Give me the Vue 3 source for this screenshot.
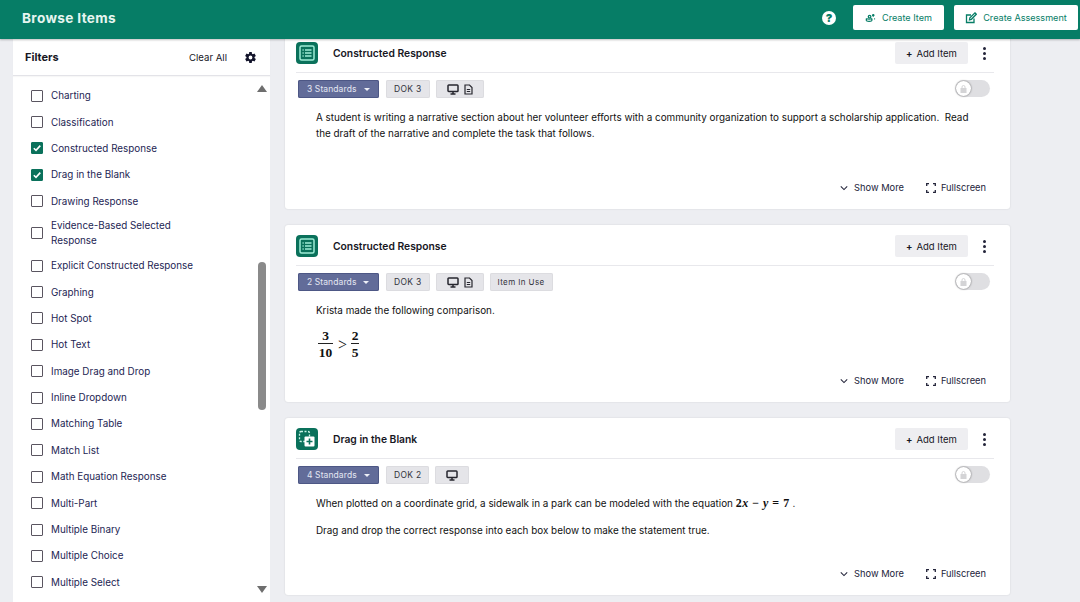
<script setup>
const filters = [
  { label: 'Charting' },
  { label: 'Classification' },
  { label: 'Constructed Response', checked: true },
  { label: 'Drag in the Blank', checked: true },
  { label: 'Drawing Response' },
  { label: 'Evidence-Based Selected Response', tall: true },
  { label: 'Explicit Constructed Response' },
  { label: 'Graphing' },
  { label: 'Hot Spot' },
  { label: 'Hot Text' },
  { label: 'Image Drag and Drop' },
  { label: 'Inline Dropdown' },
  { label: 'Matching Table' },
  { label: 'Match List' },
  { label: 'Math Equation Response' },
  { label: 'Multi-Part' },
  { label: 'Multiple Binary' },
  { label: 'Multiple Choice' },
  { label: 'Multiple Select' }
]

const items = [
  { id: 1, type: 'list', title: 'Constructed Response', standards: '3 Standards', dok: 'DOK 3', doc: true },
  { id: 2, type: 'list', title: 'Constructed Response', standards: '2 Standards', dok: 'DOK 3', doc: true, inUse: true },
  { id: 3, type: 'drag', title: 'Drag in the Blank', standards: '4 Standards', dok: 'DOK 2', doc: false }
]
</script>

<template>
  <div class="page">
    <header class="topbar">
      <h1 class="page-title">Browse Items</h1>
      <div class="top-actions">
        <span class="help">?</span>
        <button class="top-btn item-btn">
          <svg width="11" height="12" viewBox="0 0 12 12" fill="none" stroke="#067d66" stroke-width="1.4">
            <path d="M1.500 6.500c2 1 4 1 6 0M1.500 9c2 1 4 1 6 0M1.500 6.500V9M7.500 6.500V9" />
            <circle cx="5" cy="4.500" r="1.400" />
            <path d="M9 1.500v3M7.700 3h2.600M10 7h1" />
          </svg>
          Create Item
        </button>
        <button class="top-btn assess-btn">
          <svg width="12" height="12" viewBox="0 0 12 12" fill="none" stroke="#067d66" stroke-width="1.3">
            <path d="M9 6.500V10.500H1.500V3H6" />
            <path d="M4.500 7.800l.4-2L10 .9l1.300 1.400L6.400 7.300z" />
          </svg>
          Create Assessment
        </button>
      </div>
    </header>

    <div class="body">
      <aside class="sidebar">
        <div class="filter-head">
          <span class="filter-title">Filters</span>
          <span class="clear">Clear All</span>
          <svg class="gear" width="13" height="13" viewBox="0 0 24 24" fill="#12132a">
            <path d="M19.400 13c.1-.3.1-.7.1-1s0-.7-.1-1l2.500-1.900-2.500-4.300-3 1.200c-.5-.4-1.100-.7-1.700-1L14.300 1.800H9.700L9.300 5c-.6.3-1.200.6-1.700 1l-3-1.200L2.100 9.100 4.600 11c-.1.300-.1.700-.1 1s0 .7.1 1l-2.500 1.900 2.500 4.300 3-1.200c.5.400 1.100.7 1.700 1l.4 3.200h4.600l.4-3.200c.6-.3 1.200-.6 1.700-1l3 1.200 2.500-4.300zM12 15.500a3.500 3.500 0 1 1 0-7 3.500 3.500 0 0 1 0 7z" />
          </svg>
        </div>
        <ul class="filter-list">
          <li v-for="f in filters" :key="f.label" class="filter" :class="{ tall: f.tall }">
            <span class="check" :class="{ on: f.checked }">
              <svg v-if="f.checked" width="10" height="10" viewBox="0 0 10 10" fill="none" stroke="#fff" stroke-width="1.600">
                <path d="M1.800 5.200 4 7.400 8.300 2.600" />
              </svg>
            </span>
            <span class="filter-label">{{ f.label }}</span>
          </li>
        </ul>
        <div class="scroll-thumb"></div>
        <span class="arrow up"></span>
        <span class="arrow down"></span>
      </aside>

      <main class="results">
        <section v-for="item in items" :key="item.id" class="card">
          <div class="card-head">
            <span class="type-icon">
              <svg v-if="item.type === 'list'" width="22" height="22" viewBox="0 0 22 22" fill="none" stroke="#9eecd6" stroke-width="1.500">
                <rect x="4" y="4" width="14" height="14" rx="1.500" />
                <path d="M6.500 8h1.200M9 8h6.500M6.500 11h1.200M9 11h6.500M6.500 14h1.200M9 14h6.500" />
              </svg>
              <svg v-else width="22" height="22" viewBox="0 0 22 22" fill="none">
                <rect x="3.500" y="3.500" width="10" height="10" rx="1.500" stroke="#c8f3e6" stroke-width="1.300" stroke-dasharray="2 1.500" />
                <rect x="8.500" y="8.500" width="10" height="10" rx="1" fill="#fff" />
                <path d="M13.500 10.500v6M10.500 13.500h6" stroke="#0a715b" stroke-width="1.600" />
              </svg>
            </span>
            <h2 class="card-title">{{ item.title }}</h2>
            <button class="add-btn"><span class="plus">+</span>Add Item</button>
            <span class="kebab"><i></i><i></i><i></i></span>
          </div>

          <div class="meta">
            <span class="pill standards">{{ item.standards }}<span class="caret"></span></span>
            <span class="pill">{{ item.dok }}</span>
            <span class="pill devices">
              <svg width="12" height="11" viewBox="0 0 12 11" fill="none" stroke="#26262e" stroke-width="1.500">
                <rect x="1" y="1" width="10" height="6.500" rx=".8" />
                <path d="M6 7.500v2M3.500 10h5" />
              </svg>
              <svg v-if="item.doc" width="9" height="11" viewBox="0 0 9 11" fill="none" stroke="#26262e" stroke-width="1.200">
                <path d="M1 1h4.500L8 3.500V10H1z" />
                <path d="M2.800 5.500h3.400M2.800 7.500h3.400" />
              </svg>
            </span>
            <span v-if="item.inUse" class="pill in-use">Item In Use</span>
            <span class="toggle"><span class="knob">
              <svg width="7" height="8" viewBox="0 0 7 8" fill="none" stroke="#d4d4d6" stroke-width="1">
                <rect x="1" y="3.500" width="5" height="4" fill="#d4d4d6" />
                <path d="M2 3.500V2a1.500 1.500 0 0 1 3 0v1.500" />
              </svg>
            </span></span>
          </div>

          <div class="content">
            <template v-if="item.id === 1">
              <p>A student is writing a narrative section about her volunteer efforts with a community organization to support a scholarship application.&nbsp; Read the draft of the narrative and complete the task that follows.</p>
            </template>
            <template v-else-if="item.id === 2">
              <p>Krista made the following comparison.</p>
              <div class="math-line">
                <span class="frac"><span>3</span><span class="den">10</span></span>
                <span class="gt">&gt;</span>
                <span class="frac"><span>2</span><span class="den">5</span></span>
              </div>
            </template>
            <template v-else>
              <p>When plotted on a coordinate grid, a sidewalk in a park can be modeled with the equation <span class="eq">2<em>x</em> − <em>y</em> = 7</span> .</p>
              <p class="second">Drag and drop the correct response into each box below to make the statement true.</p>
            </template>
          </div>

          <div class="card-foot">
            <span class="foot-link">
              <svg width="8" height="6" viewBox="0 0 10 6" fill="none" stroke="#23243a" stroke-width="1.300"><path d="M1 1l4 4 4-4" /></svg>
              Show More
            </span>
            <span class="foot-link full">
              <svg width="10" height="10" viewBox="0 0 10 10" fill="none" stroke="#23243a" stroke-width="1.300"><path d="M.7 3V.7H3M7 .7h2.300V3M9.300 7v2.300H7M3 9.300H.7V7" /></svg>
              Fullscreen
            </span>
          </div>
        </section>
      </main>
    </div>
  </div>
</template>

<style>
html, body {
  margin: 0;
  background: #edeef2;
}
</style>

<style scoped>
.page {
  width: 1080px;
  height: 602px;
  overflow: hidden;
  background: #edeef2;
  font-family: Inter, Lato, sans-serif;
  color: #17171f;
  position: relative;
}

.topbar {
  height: 39px;
  box-sizing: border-box;
  background: #067d66;
  box-shadow: 0 1px 2px rgba(0, 0, 0, 0.25);
  display: flex;
  align-items: center;
  justify-content: space-between;
  padding: 0 2px 4px 22px;
  position: relative;
  z-index: 2;
}

.page-title {
  margin: 0;
  font-size: 13.600px;
  font-weight: 700;
  color: #e6f5f0;
  letter-spacing: 0.35px;
}

.top-actions {
  display: flex;
  align-items: center;
}

.help {
  width: 14px;
  height: 14px;
  border-radius: 50%;
  background: #fff;
  color: #067d66;
  font-size: 11px;
  font-weight: 900;
  line-height: 14px;
  text-align: center;
  margin-right: 17px;
}

.top-btn {
  height: 25px;
  padding: 0;
  border: none;
  border-radius: 2px;
  background: #fff;
  color: #067d66;
  font-family: inherit;
  font-size: 9.100px;
  display: flex;
  align-items: center;
  justify-content: center;
  gap: 6px;
}

.item-btn {
  width: 91px;
  margin-right: 10px;
}

.assess-btn {
  width: 124px;
}

.body {
  display: flex;
  align-items: flex-start;
  padding-left: 13px;
}

.sidebar {
  width: 257px;
  height: 563px;
  background: #fff;
  position: relative;
  flex-shrink: 0;
}

.filter-head {
  height: 37px;
  box-sizing: border-box;
  display: flex;
  align-items: center;
  padding: 0 13px 0 12px;
  border-bottom: 1px solid #e3e3e8;
  box-shadow: 0 1px 1px rgba(0, 0, 0, 0.03);
}

.filter-title {
  font-size: 11px;
  font-weight: 700;
  flex: 1;
}

.clear {
  font-size: 9.600px;
  margin-right: 17px;
}

.filter-list {
  list-style: none;
  margin: 0;
  padding: 6.500px 0 0 18px;
}

.filter {
  height: 26.400px;
  display: flex;
  align-items: center;
  gap: 8px;
}

.filter.tall {
  height: 38px;
}

.check {
  width: 12px;
  height: 12px;
  box-sizing: border-box;
  border: 1.500px solid #5a5560;
  border-radius: 1px;
  flex-shrink: 0;
  display: flex;
  align-items: center;
  justify-content: center;
}

.check.on {
  background: #0a715b;
  border-color: #0a715b;
}

.filter-label {
  font-size: 9.850px;
  line-height: 15px;
  color: #1d2553;
  max-width: 150px;
}

.scroll-thumb {
  position: absolute;
  left: 245px;
  top: 223px;
  width: 8px;
  height: 148px;
  border-radius: 4px;
  background: #8a8a8a;
}

.arrow {
  position: absolute;
  left: 244px;
  width: 0;
  height: 0;
  border-left: 5px solid transparent;
  border-right: 5px solid transparent;
}

.arrow.up {
  top: 46px;
  border-bottom: 7px solid #6e6e6e;
}

.arrow.down {
  top: 547px;
  border-top: 7px solid #6e6e6e;
}

.results {
  margin-top: -7px;
  margin-left: 15px;
  width: 725px;
  display: flex;
  flex-direction: column;
  gap: 16px;
}

.card {
  height: 177px;
  box-sizing: border-box;
  background: #fff;
  border-radius: 3px;
  box-shadow: 0 0 2px rgba(0, 0, 0, 0.12);
  padding: 10px 16px 0 11px;
  display: flex;
  flex-direction: column;
}

.card-head {
  height: 30px;
  box-sizing: border-box;
  display: flex;
  align-items: flex-start;
}

.type-icon {
  width: 22px;
  height: 22px;
  border-radius: 4px;
  background: #0a715b;
  flex-shrink: 0;
}

.card-title {
  margin: 0 0 0 15px;
  font-size: 10.300px;
  font-weight: 600;
  line-height: 22px;
  flex: 1;
}

.add-btn {
  width: 73px;
  height: 22px;
  padding: 0;
  border: none;
  border-radius: 2px;
  background: #eeeef1;
  font-family: inherit;
  font-size: 9.500px;
  color: #17171f;
}

.plus {
  font-weight: 700;
  margin-right: 4px;
}

.kebab {
  width: 3px;
  height: 22px;
  margin: 0 8px 0 15px;
  display: flex;
  flex-direction: column;
  justify-content: center;
  gap: 2px;
}

.kebab i {
  width: 3px;
  height: 3px;
  border-radius: 50%;
  background: #23243a;
}

.meta {
  border-top: 1px solid #e8e8ec;
  padding: 7px 4px 0 2px;
  display: flex;
  align-items: flex-start;
  gap: 6px;
}

.pill {
  height: 18px;
  box-sizing: border-box;
  padding: 0 8px;
  border-radius: 2px;
  background: #e5e5e9;
  box-shadow: inset 0 0 0 1px #dcdce0;
  font-size: 8.500px;
  letter-spacing: 0.3px;
  color: #33333c;
  display: flex;
  align-items: center;
  white-space: nowrap;
}

.standards {
  width: 81px;
  background: #626c99;
  box-shadow: inset 0 0 0 1px #4d5785;
  color: #e4e7f2;
  padding-left: 9px;
  margin-right: 1px;
  letter-spacing: 0.1px;
}

.caret {
  margin-left: 7px;
  border-left: 3.500px solid transparent;
  border-right: 3.500px solid transparent;
  border-top: 3.500px solid #eef0f7;
}

.devices {
  gap: 5px;
  padding: 0 11px;
}

.in-use {
  font-size: 8px;
  letter-spacing: 0.4px;
}

.toggle {
  margin-left: auto;
  width: 35px;
  height: 17px;
  border-radius: 9px;
  background: #dfdfe2;
  position: relative;
}

.knob {
  position: absolute;
  left: 1px;
  top: 1px;
  width: 15px;
  height: 15px;
  border-radius: 50%;
  background: #fff;
  box-shadow: 0 0 2px rgba(0, 0, 0, 0.6);
  display: flex;
  align-items: center;
  justify-content: center;
}

.content {
  flex: 1;
  padding: 11px 18px 0 20px;
  font-size: 9.870px;
  line-height: 16px;
  color: #111;
}

.content p {
  margin: 0;
}

.content .second {
  margin-top: 11px;
}

.eq {
  font-family: "Liberation Serif", serif;
  font-weight: 700;
  font-size: 12px;
  letter-spacing: 0.5px;
}

.math-line {
  margin-top: 10px;
  margin-left: 2px;
  display: flex;
  align-items: center;
  font-family: "Liberation Serif", serif;
  font-weight: 700;
  font-size: 13.500px;
  line-height: 15px;
}

.frac {
  display: flex;
  flex-direction: column;
  align-items: center;
  min-width: 15px;
}

.frac + .gt + .frac {
  min-width: 8px;
}

.den {
  border-top: 1px solid #222;
  align-self: stretch;
  text-align: center;
  padding-top: 1px;
}

.gt {
  font-weight: 400;
  font-size: 16px;
  margin: 0 4px 0 5px;
}

.card-foot {
  height: 40px;
  display: flex;
  justify-content: flex-end;
  align-items: flex-start;
  padding: 12px 8px 0 0;
  box-sizing: border-box;
}

.foot-link {
  display: flex;
  align-items: center;
  gap: 6px;
  font-size: 9.300px;
  line-height: 14px;
  color: #23243a;
}

.full {
  margin-left: 22px;
  gap: 5px;
}
</style>
